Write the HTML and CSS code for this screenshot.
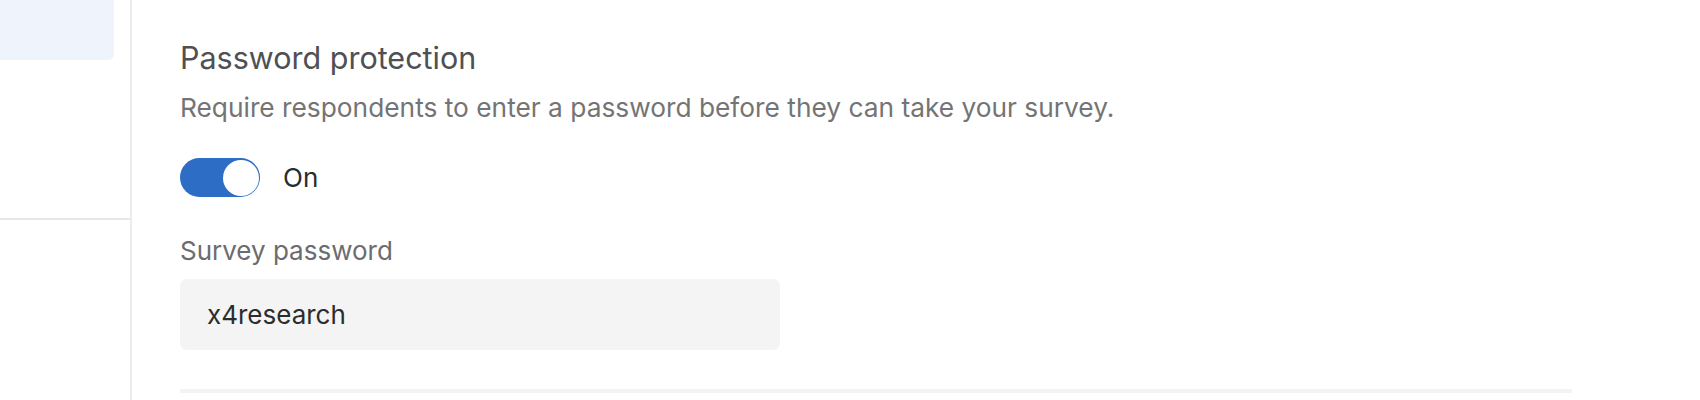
FILE: index.html
```html
<!DOCTYPE html>
<html lang="en">
<head>
<meta charset="utf-8">
<title>Password protection</title>
<link rel="stylesheet" href="styles.css">
</head>
<body>
<div class="layout">
  <aside class="sidebar">
    <div class="nav-active"></div>
    <div class="nav-sep"></div>
  </aside>
  <main class="content">
    <section class="setting">
      <h2 class="setting-title">Password protection</h2>
      <p class="setting-desc">Require respondents to enter a password before they can take your survey.</p>
      <label class="toggle-row">
        <span class="toggle" role="switch" aria-checked="true"><span class="knob"></span></span>
        <span class="toggle-label">On</span>
      </label>
      <label class="field-label" for="pw">Survey password</label>
      <div class="input" id="pw">x4research</div>
      <div class="divider"></div>
    </section>
  </main>
</div>
</body>
</html>
```

FILE: styles.css
```css
html, body {
  margin: 0;
  padding: 0;
  background: #ffffff;
  font-family: "Inter", "Liberation Sans", sans-serif;
}

.layout {
  display: flex;
  height: 400px;
  overflow: hidden;
}

.sidebar {
  width: 130px;
  flex: 0 0 130px;
  border-right: 2px solid #ececec;
  display: flex;
  flex-direction: column;
}

.nav-active {
  width: 114px;
  height: 60px;
  background: #eef3fc;
  border-bottom-right-radius: 6px;
}

.nav-sep {
  margin-top: 158px;
  height: 2px;
  background: #e7e7e7;
}

.content {
  flex: 1;
  padding: 40px 0 0 48px;
}

.setting {
  display: flex;
  flex-direction: column;
  align-items: flex-start;
}

.setting-title {
  margin: 0;
  font-size: 30.5px;
  line-height: 36px;
  font-weight: 400;
  color: #4f5053;
}

.setting-desc {
  margin: 16px 0 0;
  font-size: 26.3px;
  line-height: 32px;
  color: #747474;
}

.toggle-row {
  margin-top: 34px;
  display: flex;
  align-items: center;
  gap: 23px;
}

.toggle {
  width: 80px;
  height: 39px;
  border-radius: 20px;
  background: #2e6dc6;
  display: flex;
  justify-content: flex-end;
  align-items: center;
  padding: 0 1.5px;
  box-sizing: border-box;
}

.knob {
  width: 36px;
  height: 36px;
  border-radius: 50%;
  background: #ffffff;
}

.toggle-label {
  font-size: 26px;
  line-height: 39px;
  color: #2b2b2b;
}

.field-label {
  margin-top: 38px;
  font-size: 26px;
  line-height: 32px;
  color: #6c6c6e;
}

.input {
  margin-top: 12px;
  width: 600px;
  height: 71px;
  box-sizing: border-box;
  padding: 0 27px;
  border-radius: 7px;
  background: #f4f4f4;
  font-size: 26px;
  line-height: 71px;
  color: #2c2c2c;
}

.divider {
  margin-top: 39px;
  width: 1392px;
  height: 4px;
  background: #f3f3f3;
}
```
